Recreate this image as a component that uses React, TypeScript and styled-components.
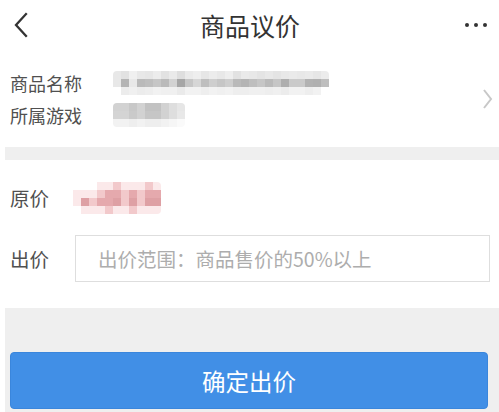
import React from "react";
import styled, { createGlobalStyle } from "styled-components";

const Global = createGlobalStyle`
  html, body { margin: 0; padding: 0; background: #fff; }
  body { font-family: "Noto Sans CJK SC", "Noto Sans", sans-serif; }
  * { box-sizing: border-box; }
`;

const Page = styled.div`
  width: 499px;
  height: 412px;
  display: flex;
  flex-direction: column;
  overflow: hidden;
  background: #fff;
`;

const Header = styled.header`
  height: 50px;
  display: grid;
  grid-template-columns: 1fr auto 1fr;
  align-items: center;
  padding: 0 12px 0 13px;
`;

const Title = styled.h1`
  margin: 0;
  font-size: 25px;
  font-weight: 400;
  color: #333;
  line-height: 1;
  padding-top: 0;
`;

const HeaderRight = styled.div`
  display: flex;
  justify-content: flex-end;
  gap: 5px;
  padding-top: 0;
`;

const Dot = styled.span`
  width: 4px;
  height: 4px;
  border-radius: 50%;
  background: #333;
`;

const InfoSection = styled.section`
  height: 97px;
  display: flex;
  align-items: center;
  padding: 0 5px 0 10px;
`;

const InfoRows = styled.div`
  flex: 1;
  display: flex;
  flex-direction: column;
  padding-bottom: 0;
`;

const Row = styled.div<{ $h: number }>`
  height: ${(p) => p.$h}px;
  display: flex;
  align-items: center;
`;

const Label = styled.span<{ $size: number; $w: number }>`
  width: ${(p) => p.$w}px;
  flex-shrink: 0;
  font-size: ${(p) => p.$size}px;
  color: #505050;
  line-height: 1;
`;

const Band = styled.div`
  margin-left: 5px;
  height: 13px;
  background: #efefef;
`;

const PriceSection = styled.section`
  height: 148px;
  display: flex;
  flex-direction: column;
  padding: 22px 9px 0 10px;
`;

const Input = styled.input`
  flex: 1;
  height: 47px;
  border: 1px solid #dedede;
  outline: none;
  padding: 0 0 0 22px;
  font-family: inherit;
  font-size: 19.5px;
  color: #333;
  &::placeholder { color: #adadad; }
`;

const Footer = styled.footer`
  flex: 1;
  margin-left: 5px;
  background: #efefef;
  display: flex;
  align-items: flex-end;
  padding: 0 11px 3px 5px;
`;

const Button = styled.button`
  width: 100%;
  height: 57px;
  border: 1px solid #3a86dc;
  border-radius: 4px;
  background: #418fe6;
  color: #fff;
  font-family: inherit;
  font-size: 23.5px;
  padding: 0;
  cursor: pointer;
`;

const MosaicGrid = styled.div<{ $cols: number; $cell: number }>`
  display: grid;
  grid-template-columns: repeat(${(p) => p.$cols}, ${(p) => p.$cell}px);
  grid-auto-rows: ${(p) => p.$cell}px;
  border-radius: 4px;
  overflow: hidden;
`;

const Cell = styled.div``;

function Mosaic({ rows, cell }: { rows: string[][]; cell: number }) {
  return (
    <MosaicGrid $cols={rows[0].length} $cell={cell}>
      {rows.flatMap((r, i) =>
        r.map((c, j) => <Cell key={`${i}-${j}`} style={{ background: c }} />)
      )}
    </MosaicGrid>
  );
}

const g = (v: number) => `rgb(${v},${v},${v})`;

const nameRows: string[][] = [
  [232, 226, 240, 232, 230, 236, 226, 234, 222, 234, 238, 230, 236, 232, 238, 226, 234, 232, 228, 232, 228, 232, 234, 232, 234, 230, 236].map(g),
  [232, 180, 232, 186, 190, 198, 186, 210, 166, 198, 214, 190, 206, 198, 206, 186, 180, 190, 198, 186, 198, 174, 202, 202, 178, 176, 190].map(g),
  [255, 236, 240, 236, 238, 242, 240, 240, 234, 242, 242, 238, 242, 240, 242, 238, 238, 240, 240, 238, 240, 236, 242, 242, 238, 242, 255].map(g),
];

const gameRows: string[][] = [
  [210, 210, 200, 210, 194, 194, 210, 222, 230].map(g),
  [212, 212, 202, 210, 198, 198, 210, 222, 232].map(g),
  [242, 242, 238, 242, 238, 238, 242, 246, 250].map(g),
];

const P0 = "#fff";
const P1 = "#fbe9ea";
const P2 = "#f2c9cb";
const P3 = "#e5a9ad";
const P4 = "#dea0a4";
const priceRows: string[][] = [
  [P0, P0, P0, P1, P1, P2, P1, P1, P1, P2, P1],
  [P1, P1, P1, P2, P3, P3, P2, P3, P2, P3, P3],
  [P1, P4, P2, P3, P3, P4, P2, P4, P2, P4, P4],
  [P0, P1, P1, P1, P2, P1, P1, P2, P1, P1, P1],
];

export default function App() {
  return (
    <Page>
      <Global />
      <Header>
        <svg width="16" height="26" viewBox="0 0 16 26" fill="none">
          <path d="M13 2 L3 13 L13 24" stroke="#333" strokeWidth="2.3" strokeLinecap="square" strokeLinejoin="miter" />
        </svg>
        <Title>商品议价</Title>
        <HeaderRight>
          <Dot />
          <Dot />
          <Dot />
        </HeaderRight>
      </Header>
      <InfoSection>
        <InfoRows>
          <Row $h={32}>
            <Label $size={18} $w={103}>商品名称</Label>
            <Mosaic rows={nameRows} cell={8} />
          </Row>
          <Row $h={32}>
            <Label $size={18} $w={103}>所属游戏</Label>
            <Mosaic rows={gameRows} cell={8} />
          </Row>
        </InfoRows>
        <svg width="12" height="22" viewBox="0 0 12 22" fill="none">
          <path d="M2 2 L9 11 L2 20" stroke="#c8c8c8" strokeWidth="2" />
        </svg>
      </InfoSection>
      <Band />
      <PriceSection>
        <Row $h={32}>
          <Label $size={19.5} $w={63}>原价</Label>
          <Mosaic rows={priceRows} cell={8} />
        </Row>
        <Row $h={47} style={{ marginTop: 21 }}>
          <Label $size={19.5} $w={65}>出价</Label>
          <Input placeholder="出价范围：商品售价的50%以上" />
        </Row>
      </PriceSection>
      <Footer>
        <Button>确定出价</Button>
      </Footer>
    </Page>
  );
}
